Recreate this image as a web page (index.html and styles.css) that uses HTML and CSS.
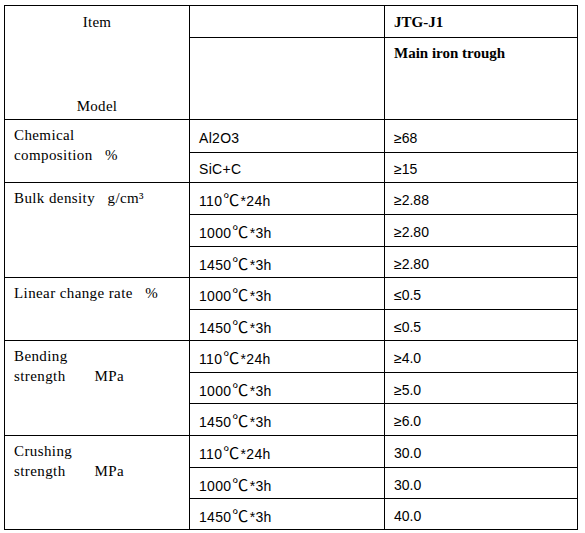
FILE: index.html
```html
<!DOCTYPE html>
<html>
<head>
<meta charset="UTF-8">
<title>JTG-J1 Main iron trough</title>
<link rel="stylesheet" href="styles.css">
</head>
<body>
<table class="spec">
<colgroup>
<col class="c-item">
<col class="c-cond">
<col class="c-val">
</colgroup>
<tr class="h-top">
<td rowspan="2" class="corner">
<div class="corner-box">
<span>Item</span>
<span>Model</span>
</div>
</td>
<td></td>
<td class="model">JTG-J1</td>
</tr>
<tr class="h-bottom">
<td></td>
<td class="model top">Main iron trough</td>
</tr>
<tr class="r33">
<td rowspan="2" class="label">Chemical<br>composition&nbsp;&nbsp;&nbsp;%</td>
<td class="cond">Al2O3</td>
<td class="val">≥68</td>
</tr>
<tr class="r30">
<td class="cond">SiC+C</td>
<td class="val">≥15</td>
</tr>
<tr class="r32">
<td rowspan="3" class="label">Bulk density&nbsp;&nbsp;&nbsp;g/cm³</td>
<td class="cond">110<span class="deg">℃</span>*24h</td>
<td class="val">≥2.88</td>
</tr>
<tr class="r32">
<td class="cond">1000<span class="deg">℃</span>*3h</td>
<td class="val">≥2.80</td>
</tr>
<tr>
<td class="cond">1450<span class="deg">℃</span>*3h</td>
<td class="val">≥2.80</td>
</tr>
<tr class="r32">
<td rowspan="2" class="label">Linear change rate&nbsp;&nbsp;&nbsp;%</td>
<td class="cond">1000<span class="deg">℃</span>*3h</td>
<td class="val">≤0.5</td>
</tr>
<tr>
<td class="cond">1450<span class="deg">℃</span>*3h</td>
<td class="val">≤0.5</td>
</tr>
<tr class="r32">
<td rowspan="3" class="label">Bending<br>strength&nbsp;&nbsp;&nbsp;&nbsp;&nbsp;&nbsp;&nbsp;MPa</td>
<td class="cond">110<span class="deg">℃</span>*24h</td>
<td class="val">≥4.0</td>
</tr>
<tr>
<td class="cond">1000<span class="deg">℃</span>*3h</td>
<td class="val">≥5.0</td>
</tr>
<tr class="r32">
<td class="cond">1450<span class="deg">℃</span>*3h</td>
<td class="val">≥6.0</td>
</tr>
<tr class="r32">
<td rowspan="3" class="label">Crushing<br>strength&nbsp;&nbsp;&nbsp;&nbsp;&nbsp;&nbsp;&nbsp;MPa</td>
<td class="cond">110<span class="deg">℃</span>*24h</td>
<td class="val">30.0</td>
</tr>
<tr>
<td class="cond">1000<span class="deg">℃</span>*3h</td>
<td class="val">30.0</td>
</tr>
<tr>
<td class="cond">1450<span class="deg">℃</span>*3h</td>
<td class="val">40.0</td>
</tr>
</table>
</body>
</html>
```

FILE: styles.css
```css
body {
	margin: 0;
	padding: 5px 0 0 4px;
	background-color: #fff;
	color: #000;
	font-family: "Liberation Serif", "Noto Sans CJK SC", serif;
	font-size: 15px;
}

.spec {
	border-collapse: collapse;
	table-layout: fixed;
	width: 573px;
}

.c-item {
	width: 185px;
}

.c-cond {
	width: 195px;
}

.c-val {
	width: 193px;
}

td {
	border: 1px solid #000;
	height: 31px;
	padding: 0 0 0 9px;
	vertical-align: middle;
	line-height: 20px;
	box-sizing: border-box;
}

.r30 td {
	height: 30px;
}

.r32 td {
	height: 32px;
}

.r33 td {
	height: 33px;
}

.h-top td {
	height: 32px;
}

.h-bottom td {
	height: 82px;
}

.corner {
	padding: 0;
	vertical-align: top;
}

.corner-box {
	display: flex;
	flex-direction: column;
	justify-content: space-between;
	align-items: center;
	height: 113px;
	padding: 6px 0 3px;
	box-sizing: border-box;
	letter-spacing: 0.3px;
}

.model {
	font-weight: bold;
}

.top {
	vertical-align: top;
	padding-top: 5px;
}

.label {
	vertical-align: top;
	padding-top: 5px;
	letter-spacing: 0.4px;
}

.cond, .val {
	font-family: "Liberation Sans", "Noto Sans CJK SC", sans-serif;
	font-size: 14px;
	padding-top: 3px;
}

.cond {
	letter-spacing: 0.3px;
}

.deg {
	font-family: "Noto Sans CJK SC", sans-serif;
	font-size: 16px;
	margin: 0 1px;
}
```
